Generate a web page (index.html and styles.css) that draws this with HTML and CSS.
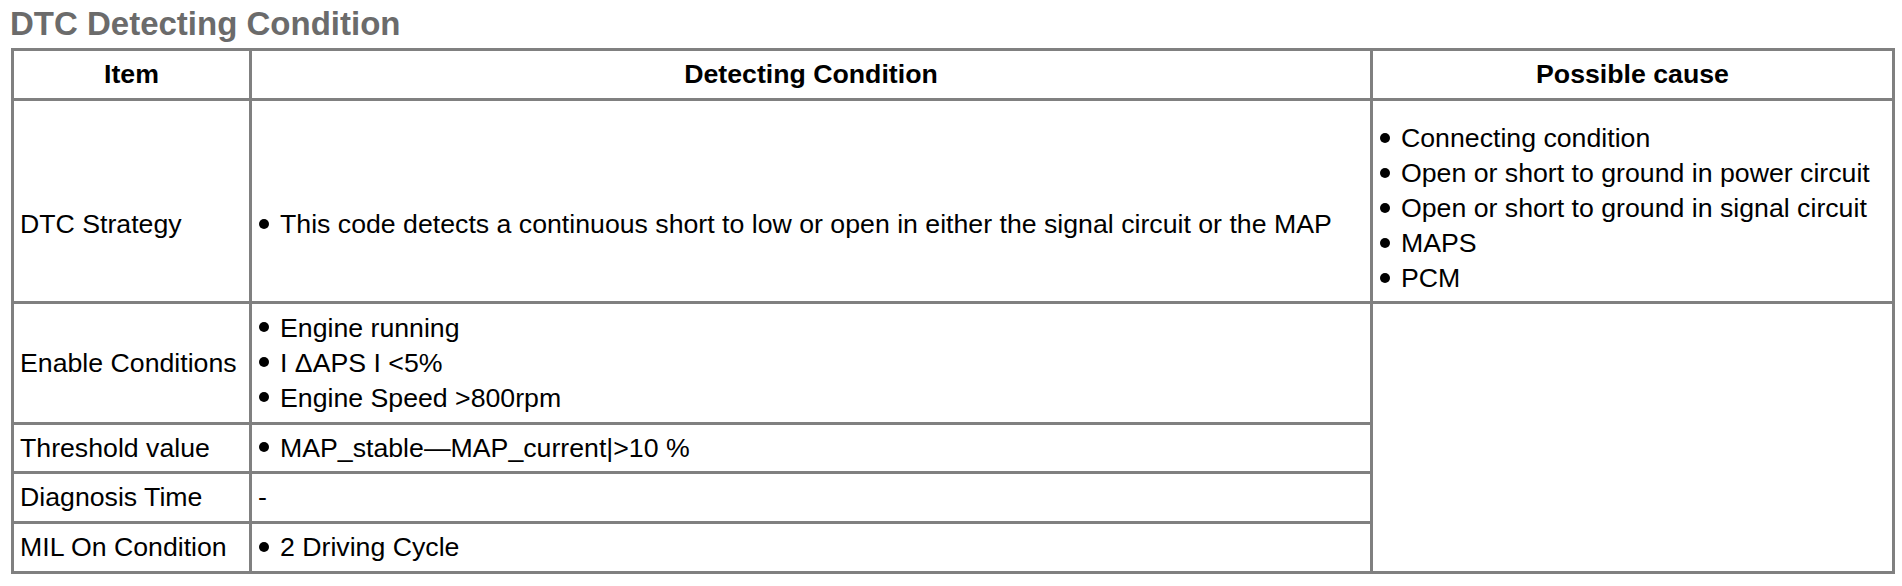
FILE: index.html
```html
<!DOCTYPE html>
<html lang="en">
<head>
<meta charset="utf-8">
<title>DTC Detecting Condition</title>
<link rel="stylesheet" href="styles.css">
</head>
<body>
<div class="page">
  <h1 class="title">DTC Detecting Condition</h1>
  <table class="dtc">
    <colgroup>
      <col class="c-item">
      <col class="c-cond">
      <col class="c-cause">
    </colgroup>
    <thead>
      <tr class="row-head">
        <th>Item</th>
        <th>Detecting Condition</th>
        <th>Possible cause</th>
      </tr>
    </thead>
    <tbody>
      <tr class="row-strategy">
        <td class="shift">DTC Strategy</td>
        <td class="shift">
          <ul class="bl">
            <li>This code detects a continuous short to low or open in either the signal circuit or the MAP</li>
          </ul>
        </td>
        <td class="cause">
          <ul class="bl">
            <li>Connecting condition</li>
            <li>Open or short to ground in power circuit</li>
            <li>Open or short to ground in signal circuit</li>
            <li>MAPS</li>
            <li>PCM</li>
          </ul>
        </td>
      </tr>
      <tr class="row-enable">
        <td>Enable Conditions</td>
        <td>
          <ul class="bl">
            <li>Engine running</li>
            <li>I ΔAPS I &lt;5%</li>
            <li>Engine Speed &gt;800rpm</li>
          </ul>
        </td>
        <td rowspan="4"></td>
      </tr>
      <tr class="row-threshold">
        <td>Threshold value</td>
        <td>
          <ul class="bl">
            <li>MAP_stable—MAP_current|&gt;10 %</li>
          </ul>
        </td>
      </tr>
      <tr class="row-single">
        <td>Diagnosis Time</td>
        <td>-</td>
      </tr>
      <tr class="row-single">
        <td>MIL On Condition</td>
        <td>
          <ul class="bl">
            <li>2 Driving Cycle</li>
          </ul>
        </td>
      </tr>
    </tbody>
  </table>
</div>
</body>
</html>
```

FILE: styles.css
```css
html, body {
  margin: 0;
  padding: 0;
  background: #ffffff;
}

body {
  font-family: "Liberation Sans", Arial, sans-serif;
  color: #000000;
}

.page {
  padding: 4px 0 0 11px;
}

.title {
  margin: 0 0 4px -1px;
  font-size: 33px;
  line-height: 40px;
  font-weight: bold;
  color: #6b6b6b;
}

.dtc {
  border-collapse: collapse;
  table-layout: fixed;
  width: 1881px;
  font-size: 26.7px;
  line-height: 35px;
}

.c-item { width: 238px; }
.c-cond { width: 1121px; }
.c-cause { width: 522px; }

.dtc th,
.dtc td {
  border: 3px solid #808080;
  padding: 0 6px;
  vertical-align: middle;
  text-align: left;
  white-space: nowrap;
}

.dtc th {
  font-weight: bold;
  text-align: center;
}

.row-head { height: 50px; }
.row-strategy { height: 203px; }
.row-enable { height: 121px; }
.row-threshold { height: 49px; }
.row-single { height: 50px; }

.dtc td.shift {
  padding-top: 52px;
  padding-bottom: 5px;
}

.dtc td.cause {
  padding-top: 20px;
  padding-bottom: 5px;
}

.bl {
  list-style: none;
  margin: 0;
  padding: 0;
}

.bl li {
  margin-left: 1px;
}

.bl li::before {
  content: "";
  display: inline-block;
  width: 10px;
  height: 10px;
  border-radius: 50%;
  background: #000000;
  margin-right: 11px;
  vertical-align: 4.5px;
}
```
